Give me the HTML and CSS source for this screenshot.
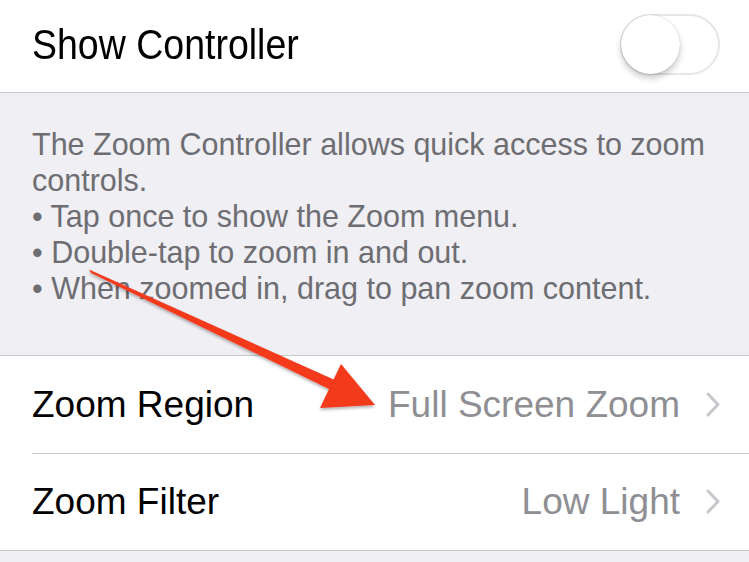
FILE: index.html
```html
<!DOCTYPE html>
<html>
<head>
<meta charset="utf-8">
<link rel="stylesheet" href="styles.css">
</head>
<body>
<div class="screen">
  <div class="cell cell-top">
    <span class="label label-tall">Show Controller</span>
    <div class="switch"><div class="knob"></div></div>
  </div>
  <div class="footer">
    <p>The Zoom Controller allows quick access to zoom controls.</p>
    <p>• Tap once to show the Zoom menu.</p>
    <p>• Double-tap to zoom in and out.</p>
    <p>• When zoomed in, drag to pan zoom content.</p>
  </div>
  <div class="group">
    <div class="cell row">
      <span class="label">Zoom Region</span>
      <span class="value">Full Screen Zoom</span>
      <svg class="chev" width="14" height="25" viewBox="0 0 14 25"><polyline points="2,2 12,12.5 2,23" fill="none" stroke="#c7c7cc" stroke-width="3" stroke-linecap="round" stroke-linejoin="round"/></svg>
    </div>
    <div class="cell row">
      <span class="label">Zoom Filter</span>
      <span class="value">Low Light</span>
      <svg class="chev" width="14" height="25" viewBox="0 0 14 25"><polyline points="2,2 12,12.5 2,23" fill="none" stroke="#c7c7cc" stroke-width="3" stroke-linecap="round" stroke-linejoin="round"/></svg>
    </div>
  </div>
  <svg class="arrow" width="749" height="562" viewBox="0 0 749 562">
    <defs>
      <filter id="sh" x="-10%" y="-10%" width="120%" height="130%">
        <feDropShadow dx="0" dy="2" stdDeviation="1.5" flood-color="#000" flood-opacity="0.3"/>
      </filter>
    </defs>
    <g filter="url(#sh)" fill="#f33a1f">
      <polygon points="89,269.5 91,273 333,391 337,381"/>
      <polygon points="375,405 341,364 320,408"/>
    </g>
  </svg>
</div>
</body>
</html>
```

FILE: styles.css
```css
html, body {
  margin: 0;
  padding: 0;
  background: #efeff4;
}
.screen {
  position: relative;
  width: 749px;
  height: 562px;
  overflow: hidden;
  font-family: "Liberation Sans", Arial, sans-serif;
}
.cell {
  background: #fff;
  display: flex;
  align-items: center;
  box-sizing: border-box;
}
.cell-top {
  height: 93px;
  padding: 0 29px 4px 32px;
  border-bottom: 1px solid #c8c7cc;
  justify-content: space-between;
}
.label {
  font-size: 37px;
  color: #000;
  flex: 1;
}
.label-tall {
  display: inline-block;
  transform: scaleY(1.12);
  transform-origin: left center;
  font-size: 37.5px;
}
.switch {
  position: relative;
  width: 100px;
  height: 61px;
  box-sizing: border-box;
  border: 2px solid #e5e5ea;
  border-radius: 31px;
  background: #fff;
}
.knob {
  position: absolute;
  left: -1px;
  top: -1px;
  width: 59px;
  height: 59px;
  border-radius: 50%;
  background: #fff;
  box-shadow: 0 4px 6px rgba(0,0,0,0.22), 0 0 1px rgba(0,0,0,0.25);
}
.footer {
  height: 262px;
  box-sizing: border-box;
  padding: 33px 10px 0 32px;
  color: #6d6d72;
  font-size: 30.5px;
  line-height: 36px;
}
.footer p {
  margin: 0;
}
.group {
  border-top: 1px solid #c8c7cc;
  border-bottom: 1px solid #c8c7cc;
  background: #fff;
}
.row {
  height: 97px;
  padding: 0 29px 0 32px;
  position: relative;
}
.row + .row::before {
  content: "";
  position: absolute;
  left: 32px;
  right: 0;
  top: 0;
  border-top: 1px solid #c8c7cc;
}
.value {
  font-size: 37px;
  color: #8e8e93;
  margin-right: 26px;
}
.chev {
  display: block;
}
.arrow {
  position: absolute;
  left: 0;
  top: 0;
  pointer-events: none;
}
```
